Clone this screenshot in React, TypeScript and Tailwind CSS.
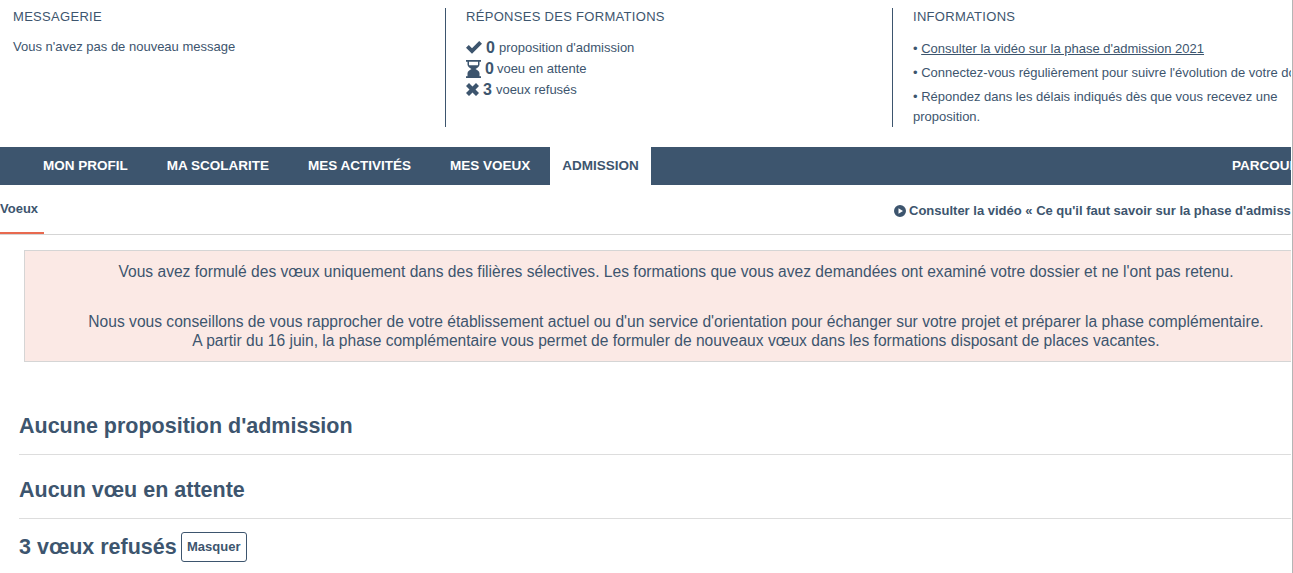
const navItems = ['MON PROFIL', 'MA SCOLARITE', 'MES ACTIVITÉS', 'MES VOEUX'];

const CheckIcon = () => (
    <svg viewBox="0 0 16 13" className="w-4 h-[13px] fill-[#3d556e]">
        <path d="M0 6.800 2.800 4 6 7.200 13.200 0 16 2.800 6 12.800z" />
    </svg>
);

const HourglassIcon = () => (
    <svg viewBox="0 0 15 18" className="w-[15px] h-[18px] fill-[#3d556e]">
        <path
            fillRule="evenodd"
            d="M0 0h15v1.800h-1.500v3c0 2-2.500 3.200-4 4.200 1.500 1 4 2.200 4 4.200v3H15V18H0v-1.800h1.500v-3c0-2 2.500-3.200 4-4.200-1.500-1-4-2.200-4-4.200v-3H0z M3 1.800V4.500c0 .3.100.5.300.7H11.700c.2-.2.300-.4.300-.7V1.800z"
        />
    </svg>
);

const CrossIcon = () => (
    <svg viewBox="0 0 13 13" className="w-[13px] h-[13px] fill-[#3d556e]">
        <path d="M3 0 6.500 3.500 10 0 13 3 9.500 6.500 13 10 10 13 6.500 9.500 3 13 0 10 3.500 6.500 0 3z" />
    </svg>
);

const PlayIcon = () => (
    <svg viewBox="0 0 12 12" className="w-3 h-3 fill-[#3d556e] shrink-0">
        <path fillRule="evenodd" d="M6 0a6 6 0 1 0 0 12A6 6 0 0 0 6 0zM4.500 3.200 9 6 4.500 8.800z" />
    </svg>
);

const App = (): JSX.Element => {
    return (
        <div className="w-[1293px] h-[573px] overflow-hidden bg-white">
            <div className="w-[1293px] h-[573px] border-r border-[#b5b5b5] pr-px overflow-hidden text-[#3d556e] font-['Liberation_Sans',Arial,sans-serif]">
                <div className="w-[1291px] h-[573px] overflow-hidden">
                    <header className="flex h-[147px] pt-2">
                        <section className="w-[446px] h-[119px] border-r border-[#3d556e] pl-[13px] pt-px shrink-0">
                            <h2 className="text-[13px] leading-4 tracking-[0.3px]">MESSAGERIE</h2>
                            <p className="text-[13px] leading-4 mt-[14px]">Vous n'avez pas de nouveau message</p>
                        </section>
                        <section className="w-[447px] h-[119px] border-r border-[#3d556e] pl-5 pt-px shrink-0">
                            <h2 className="text-[13px] leading-4 tracking-[0.3px]">RÉPONSES DES FORMATIONS</h2>
                            <ul className="mt-3 text-[13px] leading-[21px]">
                                <li className="flex items-center">
                                    <CheckIcon />
                                    <strong className="text-base leading-[21px] ml-1 mr-1">0</strong>
                                    <span>proposition d'admission</span>
                                </li>
                                <li className="flex items-center">
                                    <HourglassIcon />
                                    <strong className="text-base leading-[21px] ml-1 mr-[3px]">0</strong>
                                    <span>voeu en attente</span>
                                </li>
                                <li className="flex items-center">
                                    <CrossIcon />
                                    <strong className="text-base leading-[21px] ml-1 mr-1">3</strong>
                                    <span>voeux refusés</span>
                                </li>
                            </ul>
                        </section>
                        <section className="flex-1 pl-5 pt-px min-w-0">
                            <h2 className="text-[13px] leading-4 tracking-[0.3px]">INFORMATIONS</h2>
                            <ul className="mt-[14px] text-[13px] leading-5 w-[370px]">
                                <li className="mb-1">
                                    • <span className="underline">Consulter la vidéo sur la phase d'admission 2021</span>
                                </li>
                                <li className="mb-1 whitespace-nowrap">
                                    • Connectez-vous régulièrement pour suivre l'évolution de votre dossier
                                </li>
                                <li>• Répondez dans les délais indiqués dès que vous recevez une proposition.</li>
                            </ul>
                        </section>
                    </header>

                    <nav className="flex h-[38px] bg-[#3d556e] pl-[23.500px] text-[13.500px] font-bold">
                        {navItems.map((item) => (
                            <a key={item} className="px-[19.500px] text-white flex items-center">
                                {item}
                            </a>
                        ))}
                        <a className="px-[12.500px] bg-white flex items-center">ADMISSION</a>
                        <a className="ml-auto text-white flex items-center whitespace-nowrap w-[59px] overflow-hidden">PARCOURSUP</a>
                    </nav>

                    <div className="flex justify-between h-[50px] border-b border-[#d5d5d5] text-[13px] font-bold">
                        <a className="w-11 h-[49px] border-b-2 border-[#e8694f] pt-4 leading-4">Voeux</a>
                        <a className="flex items-center gap-[3px] h-[49px] pt-[3px] w-[397px] overflow-hidden whitespace-nowrap">
                            <PlayIcon />
                            <span>Consulter la vidéo « Ce qu'il faut savoir sur la phase d'admission »</span>
                        </a>
                    </div>

                    <div className="ml-6 mt-[15px] w-[1304px] h-[112px] border border-[#d5d5d5] bg-[#fbe9e5] text-[15.600px] leading-[19.500px] text-center pt-[11px]">
                        <p>Vous avez formulé des vœux uniquement dans des filières sélectives. Les formations que vous avez demandées ont examiné votre dossier et ne l'ont pas retenu.</p>
                        <p className="mt-[30px]">Nous vous conseillons de vous rapprocher de votre établissement actuel ou d'un service d'orientation pour échanger sur votre projet et préparer la phase complémentaire.</p>
                        <p>A partir du 16 juin, la phase complémentaire vous permet de formuler de nouveaux vœux dans les formations disposant de places vacantes.</p>
                    </div>

                    <section className="ml-[19px] mt-12">
                        <h2 className="text-[21.500px] leading-[32px] font-bold pb-3 border-b border-[#dddddd]">Aucune proposition d'admission</h2>
                        <h2 className="text-[21.500px] leading-[32px] font-bold pt-[19px] pb-3 border-b border-[#dddddd]">Aucun vœu en attente</h2>
                        <div className="flex items-center gap-1 pt-[13px]">
                            <h2 className="text-[21.500px] leading-[30px] font-bold">3 vœux refusés</h2>
                            <button className="w-[66px] h-[30px] rounded-[3px] border border-[#3d556e] text-[13px] font-bold">Masquer</button>
                        </div>
                    </section>
                </div>
            </div>
        </div>
    );
};

export default App;
